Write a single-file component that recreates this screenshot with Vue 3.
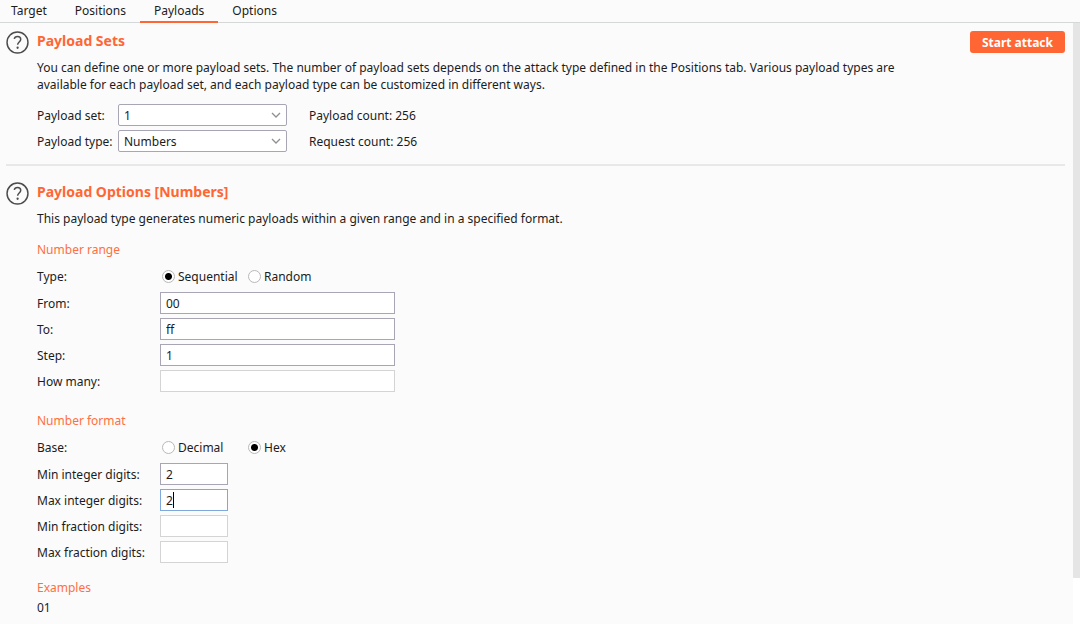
<script setup>
import { ref } from 'vue'

const tabs = ['Target', 'Positions', 'Payloads', 'Options']
const activeTab = ref('Payloads')

const payloadSet = ref('1')
const payloadType = ref('Numbers')

const rangeType = ref('Sequential')
const rangeFields = ref([
  { id: 'from', label: 'From:', value: '00' },
  { id: 'to', label: 'To:', value: 'ff' },
  { id: 'step', label: 'Step:', value: '1' },
  { id: 'how-many', label: 'How many:', value: '', disabled: true },
])

const base = ref('Hex')
const formatFields = ref([
  { id: 'min-int', label: 'Min integer digits:', value: '2' },
  { id: 'max-int', label: 'Max integer digits:', value: '2', active: true },
  { id: 'min-frac', label: 'Min fraction digits:', value: '', disabled: true },
  { id: 'max-frac', label: 'Max fraction digits:', value: '', disabled: true },
])
</script>

<template>
  <div class="app">
    <nav class="tabs">
      <button
        v-for="tab in tabs"
        :key="tab"
        type="button"
        class="tab"
        :class="{ active: tab === activeTab }"
        @click="activeTab = tab"
      >{{ tab }}</button>
    </nav>

    <div class="body">
      <main class="content">
        <section class="section sets">
          <svg class="help" viewBox="0 0 22 22" aria-hidden="true">
            <circle cx="11" cy="11" r="10" />
            <path d="M7.9 7.600C8.200 6 9.400 5.200 11 5.200c1.900 0 3.100 1 3.100 2.700 0 2.500-3 2.700-3 5.200" />
            <circle class="dot" cx="11.100" cy="16" r="1.100" />
          </svg>
          <div class="main">
            <header class="head">
              <h2>Payload Sets</h2>
              <button type="button" class="attack">Start attack</button>
            </header>
            <p class="desc">You can define one or more payload sets. The number of payload sets depends on the attack type defined in the Positions tab. Various payload types are available for each payload set, and each payload type can be customized in different ways.</p>
            <div class="set-grid">
              <label for="set">Payload set:</label>
              <div class="select">
                <select id="set" v-model="payloadSet"><option>1</option></select>
                <svg viewBox="0 0 10 6" aria-hidden="true"><path d="M1 1l4 4 4-4" /></svg>
              </div>
              <span class="count">Payload count: 256</span>
              <label for="type">Payload type:</label>
              <div class="select">
                <select id="type" v-model="payloadType"><option>Numbers</option></select>
                <svg viewBox="0 0 10 6" aria-hidden="true"><path d="M1 1l4 4 4-4" /></svg>
              </div>
              <span class="count">Request count: 256</span>
            </div>
          </div>
        </section>

        <section class="section">
          <svg class="help" viewBox="0 0 22 22" aria-hidden="true">
            <circle cx="11" cy="11" r="10" />
            <path d="M7.9 7.600C8.200 6 9.400 5.200 11 5.200c1.900 0 3.100 1 3.100 2.700 0 2.500-3 2.700-3 5.200" />
            <circle class="dot" cx="11.100" cy="16" r="1.100" />
          </svg>
          <div class="main">
            <header class="head">
              <h2>Payload Options [Numbers]</h2>
            </header>
            <p class="desc">This payload type generates numeric payloads within a given range and in a specified format.</p>

            <h3>Number range</h3>
            <div class="row radios" role="radiogroup" aria-labelledby="range-type">
              <span id="range-type" class="name">Type:</span>
              <label v-for="o in ['Sequential', 'Random']" :key="o" class="radio">
                <input v-model="rangeType" type="radio" name="range" :value="o" />{{ o }}
              </label>
            </div>
            <div v-for="f in rangeFields" :key="f.id" class="row">
              <label class="name" :for="f.id">{{ f.label }}</label>
              <input :id="f.id" v-model="f.value" class="field" type="text" :disabled="f.disabled" />
            </div>

            <h3 class="spaced">Number format</h3>
            <div class="row radios" role="radiogroup" aria-labelledby="base">
              <span id="base" class="name">Base:</span>
              <label v-for="o in ['Decimal', 'Hex']" :key="o" class="radio">
                <input v-model="base" type="radio" name="base" :value="o" />{{ o }}
              </label>
            </div>
            <div v-for="f in formatFields" :key="f.id" class="row">
              <label class="name" :for="f.id">{{ f.label }}</label>
              <div class="short">
                <input :id="f.id" v-model="f.value" class="field" :class="{ active: f.active }" type="text" :disabled="f.disabled" />
                <span v-if="f.active" class="caret"></span>
              </div>
            </div>

            <h3 class="examples">Examples</h3>
            <p class="example">01</p>
          </div>
        </section>
      </main>
      <div class="scrollbar"><div class="thumb"></div></div>
    </div>
  </div>
</template>

<style>
body {
  margin: 0;
  background: #fbfbfb;
}
</style>

<style scoped>
.app {
  display: flex;
  flex-direction: column;
  height: 100vh;
  overflow: hidden;
  background: #fbfbfb;
  color: #1c1c1c;
  font: 12px/17px "Noto Sans", "Open Sans", sans-serif;
}
button, input, select {
  font: inherit;
  color: inherit;
  box-sizing: border-box;
  margin: 0;
}
h2, h3, p { margin: 0; }
.tabs {
  display: flex;
  flex: none;
  height: 22px;
  border-bottom: 1px solid #d5d8d8;
}
.tab {
  height: 23px;
  padding: 0 14px;
  border: 0;
  border-bottom: 2px solid transparent;
  background: none;
}
.tab:first-child { padding-left: 11px; }
.tab.active { border-bottom-color: #ff6633; }
.body {
  display: flex;
  flex: 1;
  min-height: 0;
}
.content {
  flex: 1;
  min-width: 0;
  padding: 8px 8px 0 6px;
}
.section {
  display: flex;
  gap: 8px;
}
.sets {
  padding-bottom: 12px;
  margin-bottom: 16px;
  border-bottom: 2px solid #e8e8e8;
}
.help {
  flex: none;
  width: 23px;
  height: 23px;
  fill: none;
  stroke: #4c4c4c;
  stroke-width: 1.4;
}
.help .dot {
  fill: #4c4c4c;
  stroke: none;
}
.main {
  flex: 1;
  min-width: 0;
}
.head {
  display: flex;
  justify-content: space-between;
  align-items: center;
  height: 22px;
}
h2 {
  padding-bottom: 3px;
  color: #ff6633;
  font-size: 14px;
  font-weight: 700;
}
.attack {
  height: 22px;
  padding: 0 12px;
  border: 0;
  border-radius: 3px;
  background: #ff6633;
  color: #fff;
  font-weight: 700;
}
.desc {
  max-width: 900px;
  margin-top: 6px;
}
.set-grid {
  display: grid;
  grid-template-columns: 77px 169px 1fr;
  column-gap: 4px;
  row-gap: 4px;
  align-items: center;
  margin-top: 11px;
}
.set-grid label { white-space: nowrap; }
.count { margin-left: 18px; }
.select { position: relative; }
.select select {
  display: block;
  width: 100%;
  height: 22px;
  padding: 0 20px 0 5px;
  border: 1px solid #a8a6b4;
  border-radius: 2px;
  background: #fff;
  appearance: none;
}
.select svg {
  position: absolute;
  right: 6px;
  top: 8px;
  width: 10px;
  height: 6px;
  fill: none;
  stroke: #909090;
  stroke-width: 1.3;
  pointer-events: none;
}
h3 {
  margin: 14px 0 9px;
  color: #ff6f40;
  font-size: 12px;
  font-weight: 400;
}
.spaced { margin-top: 20px; }
.row {
  display: flex;
  align-items: center;
  height: 22px;
  margin-bottom: 4px;
}
.radios {
  height: 18px;
  margin-bottom: 7px;
}
.name {
  flex: none;
  width: 123px;
}
.radio {
  display: flex;
  align-items: center;
  gap: 3px;
  width: 84px;
  padding-left: 2px;
  box-sizing: border-box;
  white-space: nowrap;
}
.radio + .radio { margin-left: 2px; }
.radio input {
  flex: none;
  width: 13px;
  height: 13px;
  border: 1px solid #b8b8b8;
  border-radius: 50%;
  background: #fff;
  appearance: none;
}
.radio input:checked {
  background: radial-gradient(circle, #000 3px, #fff 4px);
}
.field {
  width: 235px;
  height: 22px;
  padding: 0 5px;
  border: 1px solid #a8a6b4;
  border-radius: 0;
  background: #fff;
  outline: 0;
}
.field:disabled { border-color: #d4d4d4; }
.field.active { border-color: #7fa9dc; }
.short {
  position: relative;
  width: 68px;
}
.short .field {
  display: block;
  width: 100%;
}
.caret {
  position: absolute;
  left: 13px;
  top: 3px;
  width: 1px;
  height: 16px;
  background: #000;
}
.examples {
  margin-top: 16px;
  margin-bottom: 3px;
}
.scrollbar {
  flex: none;
  width: 7px;
  background: #fff;
}
.thumb {
  height: 92.4%;
  background: #e5e5e5;
}
</style>
